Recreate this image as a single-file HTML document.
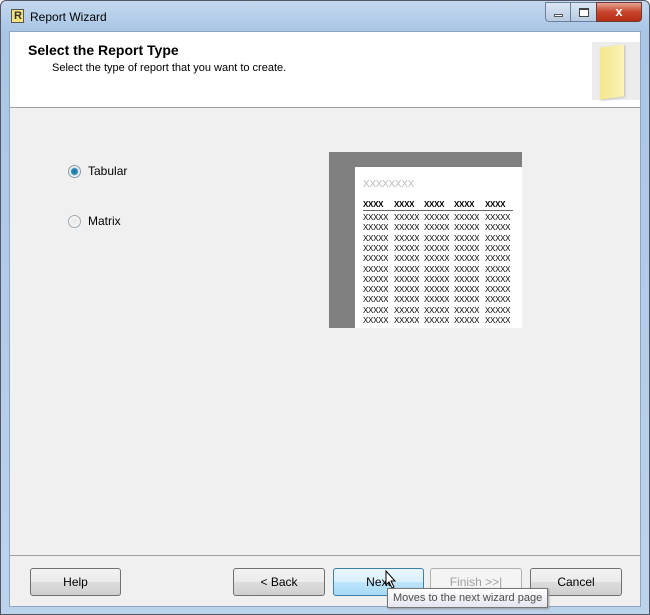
<!DOCTYPE html>
<html><head><style>
*{margin:0;padding:0;box-sizing:border-box}
body{width:650px;height:615px;overflow:hidden;background:#fff;font-family:"Liberation Sans",sans-serif;font-size:12px;color:#000;position:relative}
.frame{position:absolute;left:0;top:0;width:650px;height:615px;background:linear-gradient(180deg,#c3d8ee 0,#a9c6e6 30px,#bcd3ec 100%);border:1px solid #556;border-radius:6px 6px 0 0}
.abs{position:absolute}
.client{position:absolute;left:9px;top:31px;width:632px;height:576px;background:#f0f0f0;border:1px solid #8ea4c0}
.btn{position:absolute;top:568px;height:28px;border:1px solid #707070;border-radius:3px;background:linear-gradient(#f2f2f2,#ebebeb 50%,#dddddd 50%,#cfcfcf);text-align:center;line-height:26px;font-size:12px}
.x{font-family:"Liberation Sans",sans-serif;font-size:8px;letter-spacing:-0.3px;position:absolute}
</style></head><body>
<div class="frame"></div>
<div class="abs" style="left:11px;top:9px;width:13px;height:14px;background:#f4e27a;border:1px solid #555"></div>
<div class="abs" style="left:14px;top:10px;font-size:11px;font-weight:bold;color:#333">R</div>
<div class="abs" style="left:30px;top:10px;font-size:12px">Report Wizard</div>
<div class="abs" style="left:545px;top:2px;width:26px;height:20px;border:1px solid #6b7f9c;border-radius:0 0 0 4px;background:linear-gradient(#dbe6f3,#b8cbe2)"><div class="abs" style="left:8px;top:11px;width:9px;height:3px;background:#fff;border:1px solid #555"></div></div>
<div class="abs" style="left:570px;top:2px;width:27px;height:20px;border:1px solid #6b7f9c;background:linear-gradient(#dbe6f3,#b8cbe2)"><div class="abs" style="left:8px;top:5px;width:10px;height:9px;background:#fff;border:1px solid #444;border-top-width:2px"></div></div>
<div class="abs" style="left:596px;top:2px;width:46px;height:20px;border:1px solid #6b3a30;border-radius:0 0 4px 0;background:linear-gradient(#e8a293,#c7432c 50%,#b82d14);color:#fff;font-weight:bold;font-size:13px;text-align:center;line-height:18px">x</div>
<div class="client">
 <div class="abs" style="left:0;top:0;width:630px;height:76px;background:#fff;border-bottom:1px solid #a0a0a0"></div>
 <div class="abs" style="left:18px;top:10px;font-size:14px;font-weight:bold">Select the Report Type</div>
 <div class="abs" style="left:42px;top:30px;font-size:11px">Select the type of report that you want to create.</div>
 <div class="abs" style="left:582px;top:10px;width:48px;height:58px;background:#ececec"></div>
 <div class="abs" style="left:590px;top:14px;width:24px;height:52px;background:linear-gradient(90deg,#f3e68a,#fbf3b8);transform:skewY(-8deg);box-shadow:1px 1px 2px #bbb"></div>
 <div class="abs" style="left:58px;top:133px;width:13px;height:13px;border-radius:50%;border:1px solid #8a9aa8;background:radial-gradient(#1f6f9a 0,#2b8cc0 3px,#dfe6ec 4px,#fff 6px)"></div>
 <div class="abs" style="left:78px;top:132px;font-size:12px">Tabular</div>
 <div class="abs" style="left:58px;top:183px;width:13px;height:13px;border-radius:50%;border:1px solid #a0a8b0;background:radial-gradient(#e4e4e4,#fff)"></div>
 <div class="abs" style="left:78px;top:182px;font-size:12px">Matrix</div>
 <div class="abs" style="left:319px;top:120px;width:193px;height:176px;background:#808080"></div>
 <div class="abs" style="left:345px;top:135px;width:167px;height:161px;background:#fff;overflow:hidden" id="pv"></div>
 <div class="abs" style="left:0;top:523px;width:630px;height:1px;background:#a0a0a0"></div>
</div>
<div class="btn" style="left:30px;width:91px">Help</div>
<div class="btn" style="left:233px;width:92px">&lt; Back</div>
<div class="btn" style="left:333px;width:91px;border-color:#3c7fb1;background:linear-gradient(#eaf6fd,#d9f0fc 50%,#bee6fd 50%,#a7d9f5)">Next</div>
<div class="btn" style="left:430px;width:92px;border-color:#adb2b5;background:#f4f4f4;color:#a0a0a0">Finish &gt;&gt;|</div>
<div class="btn" style="left:530px;width:92px">Cancel</div>
<svg class="abs" style="left:385px;top:570px" width="12" height="19"><path d="M1 1 L1 15 L4 12 L7 18 L9 17 L6 11 L10 11 Z" fill="#fff" stroke="#000" stroke-width="1"/></svg>
<div class="abs" style="left:387px;top:588px;height:20px;padding:0 5px;border:1px solid #767676;background:linear-gradient(#fff,#e4e5f0);font-size:11px;line-height:18px;color:#4c4c4c;box-shadow:1px 1px 2px #999">Moves to the next wizard page</div>
<script>
var pv=document.getElementById('pv'),h='<div class="x" style="left:8px;top:12px;color:#bbb;font-size:10px">XXXXXXXX</div>';
var cx=[8,39,69,99,130];
cx.forEach(function(x){h+='<div class="x" style="left:'+x+'px;top:33px;font-weight:bold">XXXX</div>'});
h+='<div class="abs" style="left:8px;top:43px;width:150px;height:1px;background:#666"></div>';
for(var r=0;r<11;r++)cx.forEach(function(x){h+='<div class="x" style="left:'+x+'px;top:'+(46+r*10.3)+'px">XXXXX</div>'});
pv.innerHTML=h;
</script>
</body></html>
